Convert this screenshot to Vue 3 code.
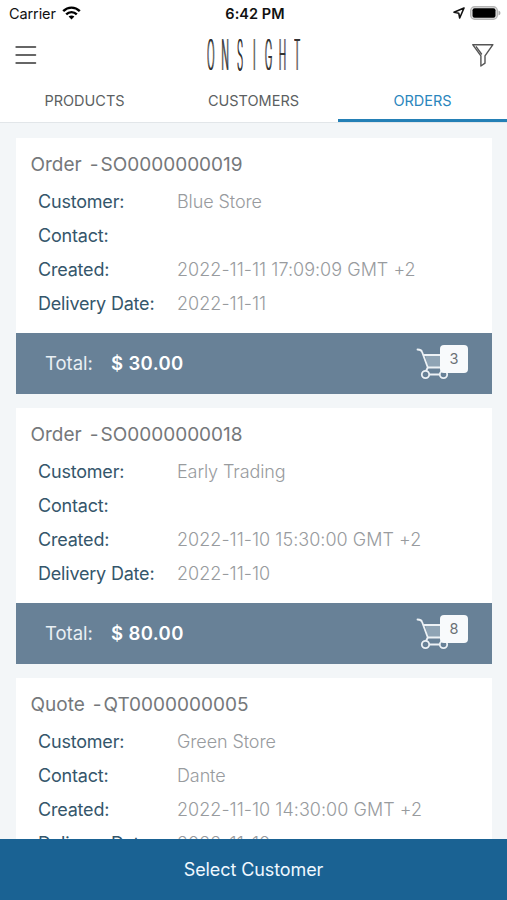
<script setup>
const tabs = [
  { label: 'PRODUCTS', active: false },
  { label: 'CUSTOMERS', active: false },
  { label: 'ORDERS', active: true },
]
const logo = 'ONSIGHT'.split('')
const orders = [
  { kind: 'Order', number: 'SO0000000019', customer: 'Blue Store', contact: '', created: '2022-11-11 17:09:09 GMT +2', delivery: '2022-11-11', total: '$ 30.00', items: 3 },
  { kind: 'Order', number: 'SO0000000018', customer: 'Early Trading', contact: '', created: '2022-11-10 15:30:00 GMT +2', delivery: '2022-11-10', total: '$ 80.00', items: 8 },
  { kind: 'Quote', number: 'QT0000000005', customer: 'Green Store', contact: 'Dante', created: '2022-11-10 14:30:00 GMT +2', delivery: '2022-11-10' },
]
</script>

<template>
  <div class="screen">
    <div class="status">
      <div class="carrier">
        <span>Carrier</span>
        <svg width="19" height="14" viewBox="0 0 19 14" fill="none" stroke="#000" stroke-width="2.4">
          <path d="M1.2 5.2C6 .4 13 .4 17.8 5.2" />
          <path d="M4.2 8.4c3-3 7.600-3 10.600 0" />
          <path d="M9.500 13.600 6.600 10.600c1.700-1.500 4.100-1.500 5.800 0z" fill="#000" stroke="none" />
        </svg>
      </div>
      <strong class="clock">6:42 PM</strong>
      <div class="power">
        <svg width="12" height="12" viewBox="0 0 12 12" fill="none" stroke="#111" stroke-width="1.600" stroke-linejoin="round">
          <path d="M11 1 1 5.300l4.800 1 .9 4.700z" />
        </svg>
        <svg width="31" height="14" viewBox="0 0 31 14">
          <rect x=".7" y=".7" width="26.600" height="12.600" rx="4" fill="#e8e8e8" stroke="#b5b5b5" stroke-width="1.400" />
          <rect x="2.500" y="2.300" width="23" height="9.400" rx="2" fill="#000" />
          <path d="M28.500 4.500q2 .8 2 2.500t-2 2.500z" fill="#aaa" />
        </svg>
      </div>
    </div>

    <header class="bar">
      <svg class="menu" width="22" height="20" viewBox="0 0 22 20" stroke="#666" stroke-width="2" stroke-linecap="round">
        <path d="M1.300 2h19M1.300 10h19M1.300 18h19" />
      </svg>
      <div class="logo">
        <span v-for="(c, i) in logo" :key="i" class="letter"><b>{{ c }}</b></span>
      </div>
      <svg class="filter" width="24" height="26" viewBox="0 0 24 26" fill="none" stroke="#555" stroke-width="1.400" stroke-linejoin="round">
        <path d="M1.700 2.700h20.200L14 13.800v7.400L9.900 24V13.800z" />
        <path d="M5.300 4.800l5.200 7.200" stroke-linecap="round" />
      </svg>
    </header>

    <nav class="tabs">
      <div v-for="t in tabs" :key="t.label" class="tab" :class="{ active: t.active }">{{ t.label }}</div>
    </nav>

    <main class="list">
      <article v-for="o in orders" :key="o.number" class="card">
        <h2 class="title"><span>{{ o.kind }}</span><span class="dash">-</span><span>{{ o.number }}</span></h2>
        <dl class="fields">
          <dt>Customer:</dt><dd>{{ o.customer }}</dd>
          <dt>Contact:</dt><dd>{{ o.contact }}</dd>
          <dt>Created:</dt><dd class="date">{{ o.created }}</dd>
          <dt>Delivery Date:</dt><dd class="date">{{ o.delivery }}</dd>
        </dl>
        <footer v-if="o.total" class="total">
          <span class="total-label">Total:</span>
          <strong>{{ o.total }}</strong>
          <div class="cart">
            <svg width="36" height="34" viewBox="0 0 36 34" fill="none" stroke="#edf2f6" stroke-width="1.800" stroke-linecap="round" stroke-linejoin="round">
              <path d="M9 7h22l-3 12H12z" fill="#8fa4b5" stroke="none" />
              <path d="M1.500 1.500c3 0 4 .4 4.600 2.500L11.800 19.500H28M8.500 7h23" />
              <path d="M11.800 19.500 10 23" />
              <path d="M9.500 26.500h18" />
              <circle cx="9.500" cy="26.500" r="3.700" fill="#688197" />
              <circle cx="27.500" cy="26.500" r="3.700" fill="#688197" />
            </svg>
            <span class="count">{{ o.items }}</span>
          </div>
        </footer>
      </article>
    </main>

    <button class="select">Select Customer</button>
  </div>
</template>

<style>
body {
  margin: 0;
  overflow: hidden;
}
</style>

<style scoped>
.screen {
  width: 507px;
  height: 900px;
  display: flex;
  flex-direction: column;
  overflow: hidden;
  background: #f3f6f8;
  font-family: Inter, "Liberation Sans", sans-serif;
}
.status {
  height: 28px;
  flex: none;
  display: grid;
  grid-template-columns: 1fr auto 1fr;
  align-items: center;
  padding: 0 6px 2px 9px;
  box-sizing: border-box;
  background: #fff;
  color: #111;
  font-size: 14.5px;
}
.carrier, .power {
  display: flex;
  align-items: center;
  gap: 6px;
}
.carrier {
  letter-spacing: -0.1px;
}
.power {
  justify-content: flex-end;
  gap: 5px;
}
.clock {
  font-weight: 600;
  letter-spacing: 0.05px;
}
.bar {
  height: 54px;
  flex: none;
  display: flex;
  align-items: center;
  justify-content: space-between;
  padding: 0 12px 0 15px;
  background: #fff;
}
.logo {
  display: flex;
  gap: 7.300px;
}
.letter {
  width: 7px;
  height: 34px;
  display: flex;
  align-items: center;
  justify-content: center;
}
.letter b {
  font-size: 42px;
  line-height: 34px;
  font-weight: 200;
  color: #333;
  text-shadow: 1.5px 0 #333, -1.5px 0 #333;
  transform: scaleX(0.235);
}
.tabs {
  height: 41px;
  flex: none;
  display: grid;
  grid-template-columns: repeat(3, 1fr);
  box-sizing: border-box;
  background: #fff;
  border-bottom: 1px solid #e2e6e9;
}
.tab {
  height: 40px;
  display: flex;
  justify-content: center;
  box-sizing: border-box;
  padding-top: 10px;
  line-height: 18px;
  font-size: 14.5px;
  color: #5c5f62;
}
.tab.active {
  color: #2a86bd;
  border-bottom: 3px solid #2480b6;
}
.list {
  flex: 1;
  min-height: 0;
  overflow: hidden;
  display: flex;
  flex-direction: column;
  gap: 14px;
  padding: 15px 15px 0 15.500px;
}
.card {
  flex: none;
  height: 256px;
  display: flex;
  flex-direction: column;
  background: #fff;
}
.title {
  display: flex;
  margin: 0;
  padding: 15px 15px 0;
  font-size: 19px;
  line-height: 24px;
  font-weight: 400;
  color: #75787b;
}
.dash {
  margin: 0 2px 0 8px;
}
.fields {
  margin: 8px 0 0;
  padding-left: 22.500px;
  display: grid;
  grid-template-columns: 139px 1fr;
  grid-auto-rows: 34.100px;
  font-size: 18px;
  line-height: 34px;
  white-space: nowrap;
}
dt {
  color: #35566b;
  letter-spacing: -0.2px;
}
dd {
  margin: 0;
  color: #989b9e;
  font-weight: 300;
  letter-spacing: -0.1px;
}
dd.date {
  letter-spacing: 0.03px;
}
.total {
  height: 61px;
  margin-top: auto;
  display: flex;
  align-items: center;
  padding: 0 24px 0 29.500px;
  background: #688197;
  color: #fff;
  font-size: 18.5px;
  box-sizing: border-box;
}
.total-label {
  color: #e9eff4;
  margin-right: 18px;
}
.total-label,
.total strong {
  padding-bottom: 1px;
}
.total strong {
  font-weight: 600;
  letter-spacing: 0.400px;
}
.cart {
  position: relative;
  width: 52px;
  height: 34px;
  margin-left: auto;
  padding-top: 3px;
}
.cart svg {
  display: block;
}
.count {
  position: absolute;
  left: 24px;
  top: 0;
  width: 28px;
  height: 28px;
  line-height: 28px;
  text-align: center;
  border-radius: 4px;
  background: #f8fafc;
  color: #6b7176;
  font-size: 14.5px;
}
.select {
  height: 61px;
  flex: none;
  border: 0;
  padding: 0;
  background: #1a6293;
  color: #eff8ff;
  font-family: inherit;
  font-size: 18px;
  letter-spacing: -0.1px;
}
</style>
